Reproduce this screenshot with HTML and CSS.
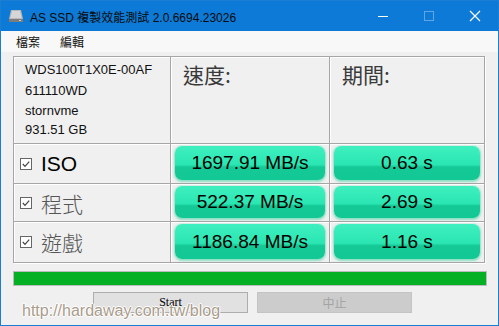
FILE: index.html
```html
<!DOCTYPE html>
<html lang="zh-Hant">
<head>
    <meta charset="UTF-8">
    <title>AS SSD 複製效能測試</title>
    <link rel="stylesheet" href="styles.css">
</head>
<body>
<div class="window">
    <div class="titlebar">
        <svg class="appIcon" width="16" height="16" viewBox="0 0 16 16">
            <path d="M3 2 H13 L15 11 H1 Z" fill="#b9b9b9"/>
            <path d="M4 3 H12 L13.6 10 H2.4 Z" fill="#d6d6d6"/>
            <rect x="1" y="11" width="14" height="3" fill="#7d7d7d"/>
            <rect x="11" y="12" width="2" height="1" fill="#cfcfcf"/>
        </svg>
        <span class="title">AS SSD 複製效能測試 2.0.6694.23026</span>
        <div class="controls">
            <svg width="46" height="30" viewBox="0 0 46 30"><path d="M18 15.5 H28" stroke="#fff" stroke-width="1"/></svg>
            <svg width="46" height="30" viewBox="0 0 46 30"><rect x="18.5" y="10.5" width="9" height="9" fill="none" stroke="#5fa6e6" stroke-width="1"/></svg>
            <svg width="46" height="30" viewBox="0 0 46 30"><path d="M18 10 L28 20 M28 10 L18 20" stroke="#fff" stroke-width="1.2"/></svg>
        </div>
    </div>
    <div class="menubar">
        <span>檔案</span>
        <span>編輯</span>
    </div>
    <div class="content">
        <div class="grid">
            <div class="cell info">
                <p>WDS100T1X0E-00AF</p>
                <p>611110WD</p>
                <p class="driver">stornvme</p>
                <p class="size">931.51 GB</p>
            </div>
            <div class="cell head">速度:</div>
            <div class="cell head">期間:</div>

            <div class="cell label">
                <svg class="check" width="12" height="12" viewBox="0 0 12 12"><rect x="0.5" y="0.5" width="11" height="11" fill="#fff" stroke="#666"/><path d="M2.8 6 L5 8.3 L9.2 3.6" fill="none" stroke="#444" stroke-width="1.2"/></svg>
                <span class="latin">ISO</span>
            </div>
            <div class="cell"><div class="pill">1697.91 MB/s</div></div>
            <div class="cell"><div class="pill">0.63 s</div></div>

            <div class="cell label">
                <svg class="check" width="12" height="12" viewBox="0 0 12 12"><rect x="0.5" y="0.5" width="11" height="11" fill="#fff" stroke="#666"/><path d="M2.8 6 L5 8.3 L9.2 3.6" fill="none" stroke="#444" stroke-width="1.2"/></svg>
                <span class="cjk">程式</span>
            </div>
            <div class="cell"><div class="pill">522.37 MB/s</div></div>
            <div class="cell"><div class="pill">2.69 s</div></div>

            <div class="cell label">
                <svg class="check" width="12" height="12" viewBox="0 0 12 12"><rect x="0.5" y="0.5" width="11" height="11" fill="#fff" stroke="#666"/><path d="M2.8 6 L5 8.3 L9.2 3.6" fill="none" stroke="#444" stroke-width="1.2"/></svg>
                <span class="cjk">遊戲</span>
            </div>
            <div class="cell"><div class="pill">1186.84 MB/s</div></div>
            <div class="cell"><div class="pill">1.16 s</div></div>
        </div>

        <div class="progress"><i class="progressFill" style="width: 100%"></i></div>

        <div class="buttons">
            <button class="btn">Start</button>
            <button class="btn disabled">中止</button>
        </div>
    </div>
    <div class="watermark">http://hardaway.com.tw/blog</div>
</div>
</body>
</html>
```

FILE: styles.css
```css
body {
    margin: 0;
    font-family: "Liberation Sans", Arial, "Noto Sans CJK TC", sans-serif;
}

.window {
    position: relative;
    width: 499px;
    height: 326px;
    box-sizing: border-box;
    border: 1px solid #1a7fd4;
    background: #f0f0f0;
    overflow: hidden;
}

.titlebar {
    display: flex;
    align-items: center;
    height: 30px;
    background: #0c7ad6;
}

.appIcon {
    margin: 0 6px 0 7px;
}

.title {
    font-size: 12px;
    color: #0a0a0a;
}

.controls {
    display: flex;
    margin-left: auto;
}

.menubar {
    display: flex;
    align-items: center;
    gap: 20px;
    height: 21px;
    padding-left: 15px;
    background: #f8f8f8;
    font-family: "Noto Sans CJK TC", sans-serif;
    font-size: 12px;
    color: #111;
}

.content {
    padding: 4px 0 0 12px;
}

.grid {
    display: grid;
    grid-template-columns: 156px 158px 154px;
    grid-template-rows: 86px 39px 37px 40px;
    gap: 1px;
    width: 470px;
    background: #a6a6a6;
    border: 1px solid #a6a6a6;
    box-shadow: 1px 1px 0 #fff;
}

.cell {
    background: #f0f0f0;
    box-shadow: inset 1px 1px 0 #fff;
    box-sizing: border-box;
    padding: 2px 4px 3px 4px;
}

.info {
    padding: 2px 0 0 11px;
    font-size: 13px;
    color: #111;
}

.info p {
    margin: 0;
    line-height: 21px;
}

.info p.driver {
    line-height: 20px;
}

.info p.size {
    line-height: 18px;
}

.head {
    padding: 4px 0 0 12px;
    font-family: "Noto Sans CJK TC", sans-serif;
    font-size: 21px;
    line-height: 26px;
    color: #3a3a3a;
}

.label {
    display: flex;
    align-items: center;
    padding: 0 0 0 6px;
}

.check {
    margin-right: 9px;
}

.latin {
    font-size: 21px;
    color: #000;
}

.cjk {
    font-family: "Noto Sans CJK TC", sans-serif;
    font-weight: 300;
    font-size: 21px;
    color: #555;
}

.pill {
    display: flex;
    align-items: center;
    justify-content: center;
    height: 100%;
    border-radius: 7px;
    background: linear-gradient(#3ff0bf 0%, #2ae6b2 55%, #14c996 62%, #12c894 100%);
    box-shadow: 0 1px 2px 1px rgba(60, 210, 160, 0.55);
    font-size: 19px;
    color: #000;
}

.progress {
    display: block;
    width: 472px;
    height: 13px;
    margin-top: 8px;
    border: 1px solid #bcbcbc;
    background: #e6e6e6;
}

.progressFill {
    display: block;
    height: 100%;
    background: #06b025;
}

.buttons {
    display: flex;
    justify-content: center;
    gap: 9px;
    margin-top: 6px;
    padding-right: 6px;
}

.btn {
    width: 155px;
    height: 21px;
    padding: 0;
    border: 1px solid #adadad;
    background: #e1e1e1;
    font-family: "Liberation Serif", serif;
    font-size: 12px;
    color: #000;
}

.btn.disabled {
    border-color: #c4c4c4;
    background: #cccccc;
    font-family: "Noto Sans CJK TC", sans-serif;
    color: #a3a3a3;
}

.watermark {
    position: absolute;
    left: 21px;
    top: 301px;
    font-size: 16px;
    color: #a99c8c;
    text-shadow: 1px 0 0 #fff, -1px 0 0 #fff, 0 1px 0 #fff, 0 -1px 0 #fff;
}
```
